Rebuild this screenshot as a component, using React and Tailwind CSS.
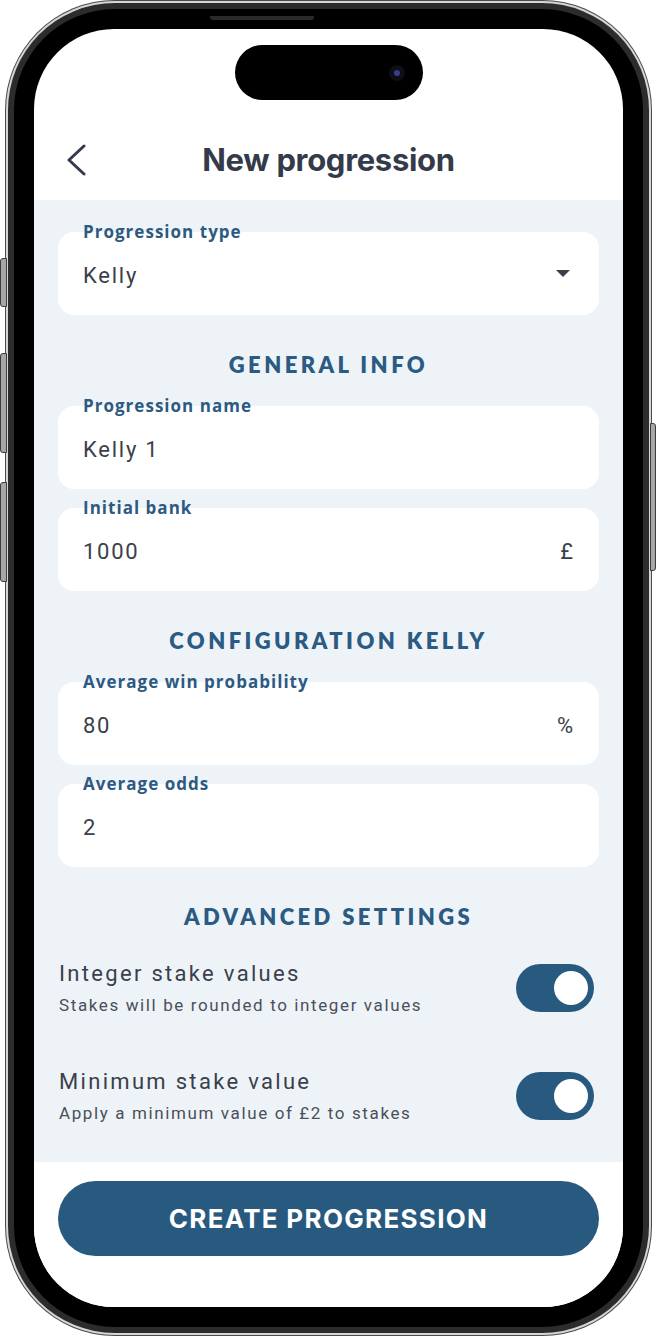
import React from "react";

function Field({ label, value, right }) {
  return (
    <div className="flex flex-col">
      <div className="relative z-10 ml-[25px] h-[20px] leading-[20px] font-['Open_Sans',sans-serif] font-bold text-[17px] tracking-[0.06em] text-[#2c5a82]">
        {label}
      </div>
      <div className="-mt-[10px] h-[83px] rounded-[16px] bg-white pl-[25px] pr-[26px] pt-[4px] flex items-center justify-between">
        <span className="font-['Roboto',sans-serif] text-[22px] tracking-[0.08em] text-[#3a3f4b]">{value}</span>
        {right}
      </div>
    </div>
  );
}

function Heading({ children }) {
  return (
    <div className="mt-[36px] mb-[17px] h-[28px] leading-[28px] text-center font-['Lato',sans-serif] font-extrabold text-[22px] tracking-[0.155em] text-[#2b5a82]">
      {children}
    </div>
  );
}

function Toggle() {
  return (
    <div className="w-[78px] h-[48px] rounded-full bg-[#285a80] flex items-center justify-end pr-[6px] shrink-0">
      <div className="w-[34px] h-[34px] rounded-full bg-white" />
    </div>
  );
}

function ToggleRow({ title, sub }) {
  return (
    <div className="flex items-center justify-between pl-[1px] pr-[5px]">
      <div className="flex flex-col gap-[6px]">
        <div className="h-[28px] leading-[28px] font-['Roboto',sans-serif] text-[22px] tracking-[0.105em] text-[#3a3f4b]">{title}</div>
        <div className="h-[22px] leading-[22px] font-['Roboto',sans-serif] text-[17px] tracking-[0.095em] text-[#4a4f5a]">{sub}</div>
      </div>
      <Toggle />
    </div>
  );
}

export default function App() {
  return (
    <div className="relative w-[656px] h-[1336px] bg-white overflow-hidden">
      {/* side buttons */}
      <div className="absolute left-0 top-[258px] w-[7px] h-[49px] rounded-l-[3px] bg-[#a6a6a6] border border-[#3c3c3c]" />
      <div className="absolute left-0 top-[353px] w-[7px] h-[100px] rounded-l-[3px] bg-[#a6a6a6] border border-[#3c3c3c]" />
      <div className="absolute left-0 top-[482px] w-[7px] h-[100px] rounded-l-[3px] bg-[#a6a6a6] border border-[#3c3c3c]" />
      <div className="absolute right-0 top-[423px] w-[6px] h-[148px] rounded-r-[3px] bg-[#a6a6a6] border border-[#3c3c3c]" />

      <div className="ml-[5px] w-[647px] h-[1336px] rounded-[110px] bg-[#4a4a4a] p-[1px]">
        <div className="h-full rounded-[109px] bg-[#d6d6d6] p-[2px]">
          <div className="h-full rounded-[107px] bg-[#2c2c2c] p-[6px]">
            <div className="relative h-full rounded-[101px] bg-black p-[20px]">
              <div className="absolute top-[7px] left-[196px] w-[104px] h-[4px] rounded-b-[3px] bg-[#2a2a2a]" />
              <div className="relative h-full rounded-[80px] bg-white overflow-hidden flex flex-col">
                {/* dynamic island */}
                <div className="absolute top-[16px] left-1/2 -translate-x-1/2 w-[188px] h-[55px] rounded-full bg-black z-20 flex items-center justify-end pr-[18px]">
                  <div className="w-[16px] h-[16px] rounded-full bg-[#0e0e16] flex items-center justify-center">
                    <div className="w-[6px] h-[6px] rounded-full bg-[#3a3d8c]" />
                  </div>
                </div>

                <header className="h-[171px] shrink-0 pt-[113px]">
                  <div className="grid grid-cols-[1fr_auto_1fr] items-center h-[36px]">
                    <div className="pl-[32px] flex items-center">
                      <svg width="20" height="32" viewBox="0 0 20 32" fill="none">
                        <polyline points="18,2 3,16 18,30" stroke="#343b4a" strokeWidth="3" strokeLinecap="round" strokeLinejoin="round" />
                      </svg>
                    </div>
                    <h1 className="font-['Inter',sans-serif] font-bold text-[31px] leading-[36px] tracking-[-0.01em] text-[#333b4a]">
                      New progression
                    </h1>
                    <div />
                  </div>
                </header>

                <main className="flex-1 bg-[#eef3f8] px-[24px] pt-[22px] flex flex-col">
                  <Field
                    label="Progression type"
                    value="Kelly"
                    right={
                      <svg width="14" height="8" viewBox="0 0 14 8" className="mr-[3px] -mt-[4px]">
                        <polygon points="0,0 14,0 7,7" fill="#3a3f4b" />
                      </svg>
                    }
                  />
                  <Heading>GENERAL INFO</Heading>
                  <Field label="Progression name" value="Kelly 1" />
                  <div className="h-[9px]" />
                  <Field
                    label="Initial bank"
                    value="1000"
                    right={<span className="font-['Roboto',sans-serif] text-[22px] text-[#3a3f4b]">£</span>}
                  />
                  <Heading>CONFIGURATION KELLY</Heading>
                  <Field
                    label="Average win probability"
                    value="80"
                    right={<span className="font-['Roboto',sans-serif] text-[22px] text-[#3a3f4b]">%</span>}
                  />
                  <div className="h-[9px]" />
                  <Field label="Average odds" value="2" />
                  <Heading>ADVANCED SETTINGS</Heading>
                  <div className="mt-[12px] flex flex-col gap-[52px]">
                    <ToggleRow title="Integer stake values" sub="Stakes will be rounded to integer values" />
                    <ToggleRow title="Minimum stake value" sub="Apply a minimum value of £2 to stakes" />
                  </div>
                </main>

                <footer className="h-[145px] shrink-0 px-[24px] pt-[19px] bg-white">
                  <button className="w-full h-[75px] rounded-full bg-[#285a80] text-white font-['Inter',sans-serif] font-bold text-[26px] tracking-[0.05em]">
                    CREATE PROGRESSION
                  </button>
                </footer>
              </div>
            </div>
          </div>
        </div>
      </div>
    </div>
  );
}
